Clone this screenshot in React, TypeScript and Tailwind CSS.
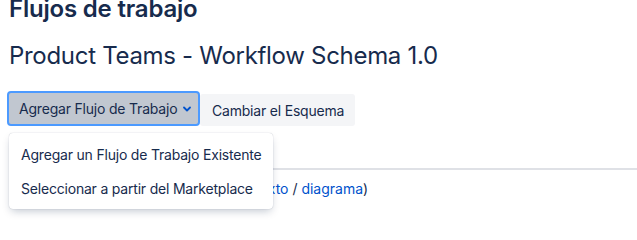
import React from "react";

const Chevron = () => (
    <svg width="8" height="6" viewBox="0 0 8 6" className="ml-[6px]">
        <path d="M1 1.5 L4 4.5 L7 1.5" fill="none" stroke="#0052cc" strokeWidth="1.8" strokeLinecap="round" strokeLinejoin="round" />
    </svg>
);

export default function App() {
    return (
        <div className="w-[637px] h-[240px] overflow-hidden bg-white font-['Inter',sans-serif] text-[#172b4d] whitespace-nowrap">
            <div className="pl-[9px]">
                <h1 className="mt-[-5px] text-[24px] leading-[28px] font-semibold tracking-[-0.2px]">Flujos de trabajo</h1>
                <h2 className="mt-[19px] text-[24px] leading-[28px] font-normal tracking-[-0.3px]">Product Teams - Workflow Schema 1.0</h2>
            </div>
            <div className="relative tracking-[-0.2px]">
                <div className="flex items-end mt-[21px] pl-[7px]">
                    <button className="flex items-center h-[35px] w-[193px] pl-[10px] border-2 border-[#4c9aff] rounded-[4px] bg-[#c1c7d0] text-[14px]">
                        Agregar Flujo de Trabajo
                        <Chevron />
                    </button>
                    <button className="h-[32px] w-[155px] px-3 rounded-[3px] bg-[#f4f5f7] text-[14px]">
                        Cambiar el Esquema
                    </button>
                </div>
                <div className="mt-[42px] ml-[9px] border-t-2 border-[#dfe1e6]">
                    <p className="pt-[8px] pl-[174px] text-[14px] tracking-normal">
                        (Ver como <a className="text-[#0052cc]" href="#">texto</a> / <a className="text-[#0052cc]" href="#">diagrama</a>)
                    </p>
                </div>
                <ul className="absolute left-[9px] top-[42px] w-[264px] py-1 bg-white rounded-[4px] shadow-[0_4px_8px_-2px_rgba(9,30,66,0.25),0_0_1px_rgba(9,30,66,0.31)] text-[14px]">
                    <li className="h-[34px] flex items-center px-3">Agregar un Flujo de Trabajo Existente</li>
                    <li className="h-[34px] flex items-center px-3">Seleccionar a partir del Marketplace</li>
                </ul>
            </div>
        </div>
    );
}
